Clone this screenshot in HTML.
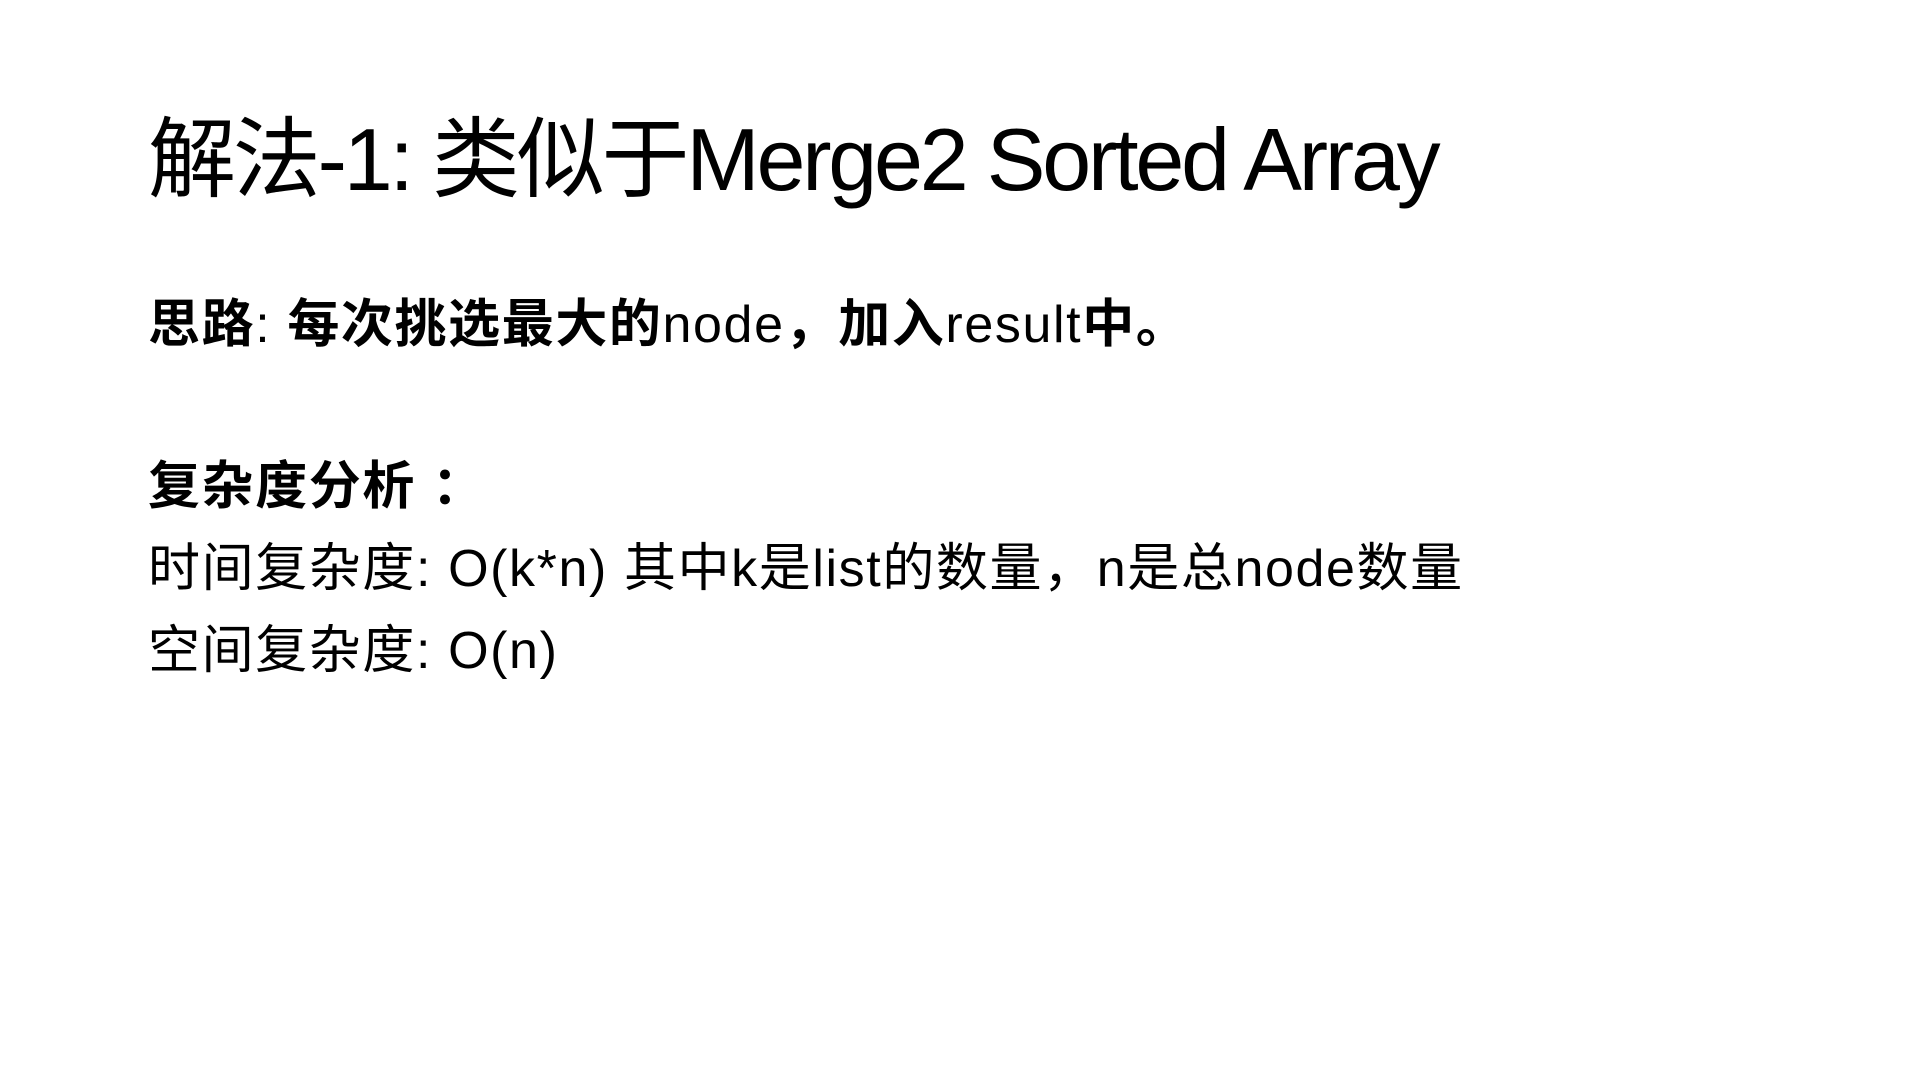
<!DOCTYPE html>
<html><head><meta charset="utf-8"><style>
html,body{margin:0;padding:0;background:#fff;width:1920px;height:1080px;overflow:hidden}
.l{position:absolute;left:148px;white-space:nowrap;color:#000;font-family:"Liberation Sans","Noto Sans CJK SC",sans-serif;line-height:1}
.t{font-size:88px;top:116px;letter-spacing:-3.2px}
.b{font-size:52px;letter-spacing:1.6px}
b{font-weight:bold}
</style></head><body>
<div class="l t">解法-1: 类似于Merge2 Sorted Array</div>
<div class="l b" style="top:299px"><b>思路</b>: <b>每次挑选最大的</b>node<b>，加入</b>result<b>中。</b></div>
<div class="l b" style="top:461px"><b>复杂度分析 ：</b></div>
<div class="l b" style="top:543px">时间复杂度: O(k*n) 其中k是list的数量，n是总node数量</div>
<div class="l b" style="top:625px">空间复杂度: O(n)</div>
</body></html>
